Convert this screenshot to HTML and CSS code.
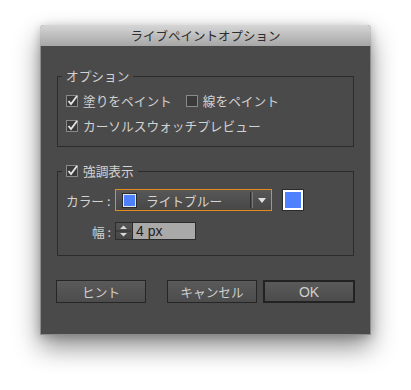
FILE: index.html
```html
<!DOCTYPE html>
<html lang="ja">
<head>
<meta charset="utf-8">
<title>ライブペイントオプション</title>
<link rel="stylesheet" href="styles.css">
</head>
<body>
<div class="dialog">
  <div class="titlebar">ライブペイントオプション</div>
  <div class="content">
    <fieldset class="group group-options">
      <legend class="legend">オプション</legend>
      <div class="rows">
        <div class="row">
          <label class="check">
            <svg class="cb" width="12" height="12" viewBox="0 0 12 12"><rect x="0.5" y="0.5" width="11" height="11" fill="#3a3a3a" stroke="#8a8a8a"/><path d="M2.5 6 L5 9 L11 1" fill="none" stroke="#e6e6e6" stroke-width="1.8"/></svg>
            <span>塗りをペイント</span>
          </label>
          <label class="check">
            <svg class="cb" width="12" height="12" viewBox="0 0 12 12"><rect x="0.5" y="0.5" width="11" height="11" fill="#3a3a3a" stroke="#8a8a8a"/></svg>
            <span>線をペイント</span>
          </label>
        </div>
        <div class="row">
          <label class="check">
            <svg class="cb" width="12" height="12" viewBox="0 0 12 12"><rect x="0.5" y="0.5" width="11" height="11" fill="#3a3a3a" stroke="#8a8a8a"/><path d="M2.5 6 L5 9 L11 1" fill="none" stroke="#e6e6e6" stroke-width="1.8"/></svg>
            <span>カーソルスウォッチプレビュー</span>
          </label>
        </div>
      </div>
    </fieldset>

    <fieldset class="group group-highlight">
      <legend class="legend">
        <label class="check">
          <svg class="cb" width="12" height="12" viewBox="0 0 12 12"><rect x="0.5" y="0.5" width="11" height="11" fill="#3a3a3a" stroke="#8a8a8a"/><path d="M2.5 6 L5 9 L11 1" fill="none" stroke="#e6e6e6" stroke-width="1.8"/></svg>
          <span>強調表示</span>
        </label>
      </legend>
      <div class="form">
        <div class="frow">
          <span class="flabel flabel-left">カラー :</span>
          <div class="select">
            <span class="mini-swatch"></span>
            <span class="select-text">ライトブルー</span>
            <span class="select-sep"></span>
            <svg class="select-arrow" width="8" height="5" viewBox="0 0 8 5"><path d="M0 0 H8 L4 5 Z" fill="#e0e0e0"/></svg>
          </div>
          <span class="big-swatch"></span>
        </div>
        <div class="frow frow-width">
          <span class="flabel flabel-right">幅 :</span>
          <div class="spinner">
            <svg width="17" height="18" viewBox="0 0 17 18"><path d="M5 7 L8.5 3.5 L12 7 Z" fill="#d8d8d8"/><line x1="1" y1="9" x2="16" y2="9" stroke="#2e2e2e"/><path d="M5 11 L8.5 14.5 L12 11 Z" fill="#d8d8d8"/></svg>
          </div>
          <div class="num">4 px</div>
        </div>
      </div>
    </fieldset>

    <div class="buttons">
      <button class="btn btn-hint">ヒント</button>
      <div class="btn-right">
        <button class="btn">キャンセル</button>
        <button class="btn btn-default">OK</button>
      </div>
    </div>
  </div>
</div>
</body>
</html>
```

FILE: styles.css
```css
* { box-sizing: border-box; }
html, body { margin: 0; padding: 0; background: #ffffff; }
body {
  width: 411px;
  height: 390px;
  padding: 25px 0 0 40px;
  font-family: "Noto Sans CJK JP", "Noto Sans", sans-serif;
  overflow: hidden;
}
.dialog {
  width: 331px;
  height: 310px;
  background: #4a4a4a;
  border: 1px solid #8c8c8c;
  border-top: none;
  border-radius: 4px 4px 0 0;
  box-shadow: 0 12px 26px rgba(0,0,0,0.45), 0 2px 10px rgba(0,0,0,0.2);
  display: flex;
  flex-direction: column;
}
.titlebar {
  height: 21px;
  margin: 0 -1px;
  background: linear-gradient(#d6d6d6, #a6a6a6);
  border-radius: 4px 4px 0 0;
  color: #2e2e2e;
  font-size: 12.5px;
  line-height: 21px;
  text-align: center;
}
.content {
  padding: 22px 16px 0 16px;
  color: #d2d2d2;
  font-size: 12.7px;
}
.group {
  margin: 0;
  border: 1px solid #2c2c2c;
  padding: 9px 8px 12px 4px;
  min-width: 0;
}
.legend {
  padding: 0 4px;
  height: 16px;
  line-height: 16px;
  color: #d2d2d2;
}
.rows { padding-left: 4px; display: flex; flex-direction: column; gap: 9px; }
.row { display: flex; align-items: center; gap: 14px; height: 16px; }
.check { display: flex; align-items: center; gap: 5px; line-height: 16px; white-space: nowrap; }
.cb { display: block; flex: none; }
.group-highlight { margin-top: 16px; padding: 10px 8px 15px 4px; }
.form { display: flex; flex-direction: column; gap: 11px; padding-left: 4px; }
.frow { display: flex; align-items: center; height: 22px; }
.frow-width { height: 18px; }
.flabel { width: 47px; padding-right: 2px; white-space: nowrap; }
.flabel-left { text-align: left; }
.flabel-right { text-align: right; }
.select {
  margin-left: 2px;
  width: 157px;
  height: 22px;
  border: 1px solid #e58a1f;
  background: linear-gradient(#575757, #474747);
  display: flex;
  align-items: center;
  padding-left: 7px;
}
.mini-swatch {
  width: 13px;
  height: 13px;
  background: #4f80ff;
  border: 1px solid #e6e6e6;
  outline: 1px solid #2a2a2a;
  flex: none;
}
.select-text { margin-left: 10px; flex: 1; color: #d6d6d6; }
.select-sep {
  width: 3px;
  height: 16px;
  border-left: 1px solid #2e2e2e;
  border-right: 1px solid #777;
}
.select-arrow { margin: 0 5px; display: block; }
.big-swatch {
  margin-left: 11px;
  width: 20px;
  height: 20px;
  border: 2px solid #ffffff;
  background: #4f80ff;
  outline: 1px solid #2a2a2a;
}
.spinner {
  margin-left: 2px;
  width: 17px;
  height: 18px;
  background: linear-gradient(#555, #464646);
  border: 1px solid #2c2c2c;
  border-right: none;
  display: flex;
}
.spinner svg { display: block; margin: -1px 0 0 -1px; }
.num {
  width: 64px;
  height: 18px;
  background: #a9a9a9;
  border: 1px solid #2c2c2c;
  color: #1e1e1e;
  font-family: "Liberation Sans", Arial, sans-serif;
  font-size: 14px;
  line-height: 16px;
  padding-left: 3px;
}
.buttons {
  margin-top: 24px;
  display: flex;
  justify-content: space-between;
}
.btn-right { display: flex; gap: 6px; margin-right: -1px; }
.btn {
  width: 90px;
  height: 23px;
  margin: 0;
  padding: 0;
  border: 1px solid #262626;
  background: linear-gradient(#5a5a5a, #4c4c4c);
  color: #cfcfcf;
  font-family: "Noto Sans CJK JP", "Noto Sans", sans-serif;
  font-size: 12.7px;
  line-height: 20px;
}
.btn-hint { margin-left: -1px; }
.btn-default {
  width: 92px;
  border: 2px solid #222;
  font-family: "Liberation Sans", Arial, sans-serif;
  font-size: 14px;
}
```
